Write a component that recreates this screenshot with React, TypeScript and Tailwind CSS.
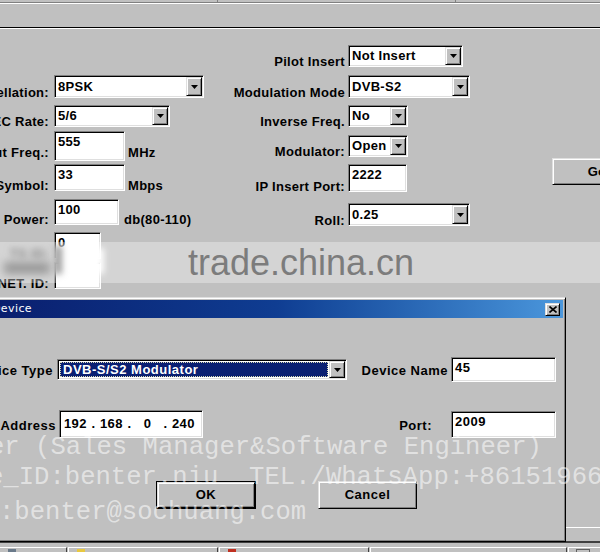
import React from "react";

// classic 3D edges
const sunken =
  "border border-t-[#808080] border-l-[#808080] border-r-white border-b-white shadow-[inset_1px_1px_0_#000,inset_-1px_-1px_0_#dfdfdf]";
const raised =
  "border border-t-[#dfdfdf] border-l-[#dfdfdf] border-r-black border-b-black shadow-[inset_1px_1px_0_#fff,inset_-1px_-1px_0_#808080]";

function DropArrow() {
  return (
    <div className={`w-[16px] shrink-0 flex items-center justify-center bg-[#c0c0c0] ${raised}`}>
      <svg width="7" height="4" viewBox="0 0 7 4">
        <path d="M0 0H7L3.5 4Z" fill="#000" />
      </svg>
    </div>
  );
}

function Combo({ value, size }: { value: string; size: string }) {
  return (
    <div className={`flex bg-white p-[1px] ${sunken} ${size}`}>
      <div className="flex-1 flex items-center pl-[2px] overflow-hidden whitespace-nowrap">{value}</div>
      <DropArrow />
    </div>
  );
}

function Edit({ value, size }: { value?: string; size: string }) {
  return (
    <div className={`bg-white pl-[3px] pt-[2px] leading-[16px] whitespace-nowrap ${sunken} ${size}`}>
      {value}
    </div>
  );
}

function Label({ text, box }: { text: string; box: string }) {
  return <div className={`flex justify-end shrink-0 whitespace-nowrap leading-[10px] ${box}`}>{text}</div>;
}

function Button({ text, size, isDefault }: { text: string; size: string; isDefault?: boolean }) {
  if (isDefault) {
    return (
      <div className={`border border-black ${size}`}>
        <div className={`h-full flex items-center justify-center bg-[#c0c0c0] ${raised}`}>{text}</div>
      </div>
    );
  }
  return <div className={`flex items-center justify-center bg-[#c0c0c0] ${raised} ${size}`}>{text}</div>;
}

export default function App() {
  return (
    <div className="relative w-[600px] h-[552px] overflow-hidden bg-[#c0c0c0] text-black text-[13px] font-bold tracking-[0.3px] font-['Liberation_Sans',Arial,sans-serif]">
      {/* main window */}
      <div className="h-[541px] flex flex-col">
        {/* toolbar bottom edge */}
        <div className="flex h-[3px] border-b border-[#808080]">
          <div className="w-[218px] border-r border-[#808080]" />
          <div className="w-[238px] border-r border-[#808080]" />
          <div className="flex-1" />
        </div>
        <div className="h-[25px] border-t border-white border-b border-b-black" />
        <div className="h-px bg-white" />

        {/* form */}
        <div className="flex">
          <div className="w-[200px] shrink-0 flex flex-col pt-[46px]">
            <div className="flex items-end">
              <Label text="Constellation:" box="w-[51px] pr-[2px]" />
              <div className="ml-[3px]">
                <Combo value="8PSK" size="w-[150px] h-[23px]" />
              </div>
            </div>
            <div className="flex items-end mt-[7px]">
              <Label text="FEC Rate:" box="w-[51px] pr-[2px]" />
              <div className="ml-[3px]">
                <Combo value="5/6" size="w-[116px] h-[22px]" />
              </div>
            </div>
            <div className="flex items-end mt-[4px]">
              <Label text="Output Freq.:" box="w-[51px] pr-[2px] mb-[3px]" />
              <div className="ml-[3px]">
                <Edit value="555" size="w-[71px] h-[30px]" />
              </div>
              <div className="ml-[3px] mb-[3px] leading-[10px]">MHz</div>
            </div>
            <div className="flex items-end mt-[3px]">
              <Label text="Symbol:" box="w-[51px] pr-[2px]" />
              <div className="ml-[3px]">
                <Edit value="33" size="w-[71px] h-[27px]" />
              </div>
              <div className="ml-[3px] leading-[10px]">Mbps</div>
            </div>
            <div className="flex items-end mt-[8px]">
              <Label text="Power:" box="w-[51px] pr-[2px]" />
              <div className="ml-[3px]">
                <Edit value="100" size="w-[65px] h-[26px]" />
              </div>
              <div className="ml-[5px] leading-[10px]">db(80-110)</div>
            </div>
            <div className="flex items-end mt-[7px]">
              <Label text="TS ID:" box="w-[51px] pr-[2px] blur-[3px] text-[#505050]" />
              <div className="ml-[3px]">
                <Edit value="0" size="w-[47px] h-[27px]" />
              </div>
            </div>
            <div className="flex items-end mt-[3px]">
              <Label text="NET. ID:" box="w-[51px] pr-[2px]" />
              <div className="ml-[3px]">
                <Edit size="w-[47px] h-[27px]" />
              </div>
            </div>
          </div>

          <div className="w-[352px] shrink-0 flex flex-col pt-[16px]">
            <div className="flex items-end">
              <Label text="Pilot Insert" box="w-[145px]" />
              <div className="ml-[3px]">
                <Combo value="Not Insert" size="w-[115px] h-[22px]" />
              </div>
            </div>
            <div className="flex items-end mt-[8px]">
              <Label text="Modulation Mode" box="w-[145px]" />
              <div className="ml-[3px]">
                <Combo value="DVB-S2" size="w-[122px] h-[23px]" />
              </div>
            </div>
            <div className="flex items-end mt-[7px]">
              <Label text="Inverse Freq." box="w-[145px]" />
              <div className="ml-[3px]">
                <Combo value="No" size="w-[60px] h-[22px]" />
              </div>
            </div>
            <div className="flex items-end mt-[8px]">
              <Label text="Modulator:" box="w-[145px]" />
              <div className="ml-[3px]">
                <Combo value="Open" size="w-[60px] h-[22px]" />
              </div>
            </div>
            <div className="flex items-end mt-[7px]">
              <Label text="IP Insert Port:" box="w-[145px]" />
              <div className="ml-[3px]">
                <Edit value="2222" size="w-[59px] h-[28px]" />
              </div>
            </div>
            <div className="flex items-end mt-[11px]">
              <Label text="Roll:" box="w-[145px]" />
              <div className="ml-[3px]">
                <Combo value="0.25" size="w-[122px] h-[23px]" />
              </div>
            </div>
          </div>

          <div className="pt-[129px] shrink-0">
            <Button text="Go" size="w-[90px] h-[27px]" />
          </div>
        </div>

        <div className="mt-auto mb-[13px] ml-[566px] border-t border-white" />
      </div>

      {/* taskbar */}
      <div className="h-[11px] border-t-2 border-t-[#404040] pt-[4px] flex bg-[#c0c0c0]">
        <div className="w-[67px] border-t border-white border-r border-r-[#404040] flex pl-[8px]">
          <div className="w-[8px] h-[4px] mt-[1px] bg-[#6a7a8a]" />
        </div>
        <div className="w-[150px] ml-px border-t border-l border-white border-r border-r-[#404040] flex pl-[8px]">
          <div className="w-[8px] h-[4px] mt-[1px] bg-[#e8c840]" />
        </div>
        <div className="w-[150px] ml-px border-t border-l border-white border-r border-r-[#404040] flex pl-[8px]">
          <div className="w-[8px] h-[4px] mt-[1px] bg-[#c03020]" />
        </div>
        <div className="w-[197px] ml-px border-t border-l border-white border-r border-r-[#404040]" />
        <div className="flex-1 ml-px border-t border-l border-white flex pl-[7px]">
          <div className="w-[14px] h-[4px] mt-[1px] border border-[#606060] border-b-0" />
        </div>
      </div>

      {/* privacy smudge over the ID rows */}
      <div className="absolute left-[54px] top-[248px] w-[50px] h-[26px] bg-white blur-[3px]" />
      <div className="absolute left-[54px] top-[246px] w-[8px] h-[28px] bg-[#707070] blur-[3px]" />
      <div className="absolute left-[4px] top-[262px] w-[46px] h-[12px] bg-[#6a6a6a] blur-[4px]" />

      {/* watermark band */}
      <div className="absolute left-0 right-0 top-[242px] h-[41px] bg-[#ffffff52] flex justify-center">
        <span className="pl-[2px] text-[36px] leading-[41px] font-normal tracking-normal text-[#7c7c7c]">trade.china.cn</span>
      </div>

      {/* dialog */}
      <div className="absolute left-[-12px] top-[297px] w-[578px] h-[245px] bg-[#c0c0c0] p-[2px] border border-t-[#dfdfdf] border-l-[#dfdfdf] border-r-black border-b-black shadow-[inset_1px_1px_0_#fff,inset_-1px_-1px_0_#808080]">
        <div className="h-[18px] flex items-center justify-between bg-gradient-to-r from-[#0a1e6e] via-[#0f3d92] to-[#4b97dc] pr-[3px]">
          <span className="pl-[1px] text-[11px] font-normal tracking-[0.4px] text-white font-['DejaVu_Sans',sans-serif]">Device</span>
          <div className={`w-[15px] h-[13px] flex items-center justify-center bg-[#c0c0c0] ${raised}`}>
            <svg width="8" height="7" viewBox="0 0 8 7">
              <path d="M0.5 0.5L7.5 6.5M7.5 0.5L0.5 6.5" stroke="#000" strokeWidth="1.6" />
            </svg>
          </div>
        </div>

        <div className="tracking-[0.5px]">
          <div className="flex items-center mt-[39px] h-[25px]">
            <Label text="Device Type" box="w-[62px] pt-[2px]" />
            <div className={`ml-[4px] flex bg-white p-[1px] w-[290px] h-[21px] ${sunken}`}>
              <div className="flex-1 m-[1px] bg-[#0a1f72] border border-dotted border-[#d8d8b0] flex items-center pl-[2px] text-white whitespace-nowrap">
                DVB-S/S2 Modulator
              </div>
              <DropArrow />
            </div>
            <Label text="Device Name" box="w-[101px] pt-[2px]" />
            <div className="ml-[3px]">
              <Edit value="45" size="w-[105px] h-[25px]" />
            </div>
          </div>

          <div className="flex items-center mt-[28px] h-[28px]">
            <Label text="IP Address" box="w-[65px] pt-[3px]" />
            <div className={`ml-[3px] w-[144px] h-[28px] bg-white flex items-center pl-px ${sunken}`}>
              <span className="w-[29px] text-center">192</span>
              <span className="w-[7px] text-center">.</span>
              <span className="w-[29px] text-center">168</span>
              <span className="w-[7px] text-center">.</span>
              <span className="w-[29px] text-center">0</span>
              <span className="w-[7px] text-center">.</span>
              <span className="w-[29px] text-center">240</span>
            </div>
            <Label text="Port:" box="w-[229px] pt-[3px]" />
            <div className="ml-[19px]">
              <Edit value="2009" size="w-[105px] h-[27px]" />
            </div>
          </div>

          <div className="flex mt-[43px]">
            <div className="ml-[165px]">
              <Button text="OK" size="w-[100px] h-[28px]" isDefault />
            </div>
            <div className="ml-[62px]">
              <Button text="Cancel" size="w-[99px] h-[28px]" />
            </div>
          </div>
        </div>
      </div>

      {/* contact watermark */}
      <div className="absolute inset-0 pointer-events-none font-['Liberation_Mono',monospace] text-[25.6px] font-normal tracking-normal leading-[34px] text-[#ffffff8c] whitespace-pre">
        <div className="absolute left-[-11px] top-[431px]">er (Sales Manager&amp;Software Engineer)</div>
        <div className="absolute left-[-12px] top-[461px]">e_ID:benter.niu  TEL./WhatsApp:+86151966</div>
        <div className="absolute left-[-1px] top-[496px]">:benter@sochuang.com</div>
      </div>
    </div>
  );
}
